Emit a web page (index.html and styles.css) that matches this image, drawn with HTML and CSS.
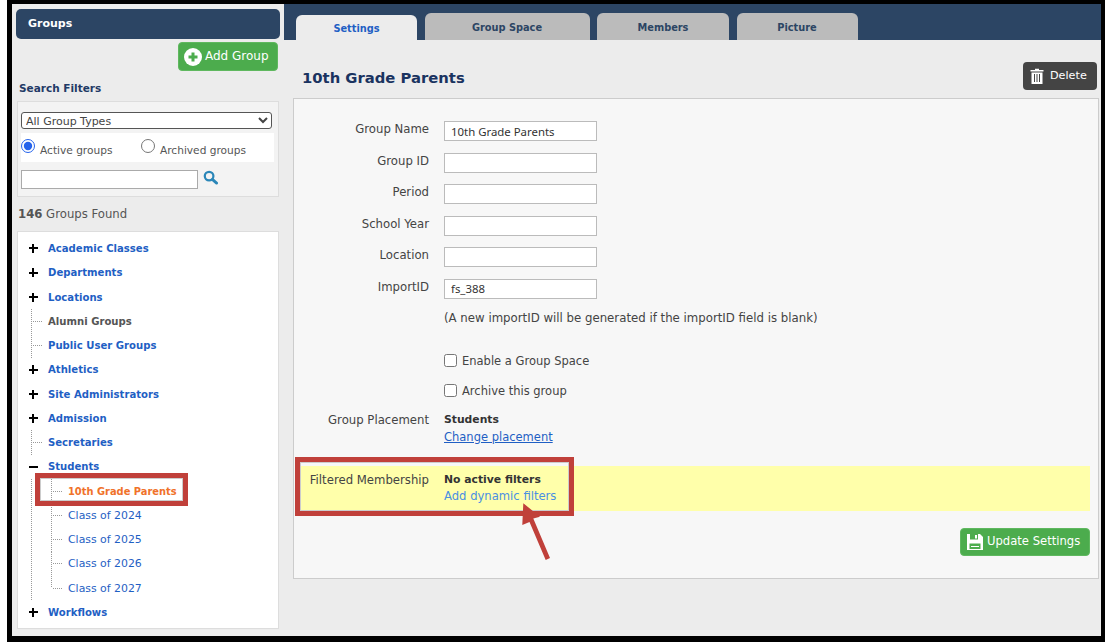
FILE: index.html
```html
<!DOCTYPE html>
<html lang="en">
<head>
<meta charset="utf-8">
<title>Groups</title>
<link rel="stylesheet" href="styles.css">
</head>
<body>
<div class="frame">
  <aside class="sidebar">
    <div class="side-head">Groups</div>
    <a class="btn btn-green add-group"><svg class="ico-plus" viewBox="0 0 18 18"><circle cx="9" cy="9" r="9" fill="#fff"/><path d="M9 4.5v9M4.5 9h9" stroke="#4cac4d" stroke-width="3"/></svg><span class="btn-label">Add Group</span></a>
    <h3 class="filters-title">Search Filters</h3>
    <div class="filters">
      <select class="type-select"><option>All Group Types</option></select>
      <div class="radio-row">
        <label class="radio radio-active"><input type="radio" name="s" checked>Active groups</label>
        <label class="radio"><input type="radio" name="s">Archived groups</label>
      </div>
      <div class="search-row">
        <input class="search-input" type="text">
        <svg class="ico-search" viewBox="0 0 16 16"><circle cx="6.5" cy="6.5" r="4.6" fill="none" stroke="#2a86b8" stroke-width="2.4"/><path d="M10 10l4.5 4" stroke="#2a86b8" stroke-width="3" stroke-linecap="round"/></svg>
      </div>
    </div>
    <p class="found"><b>146</b> Groups Found</p>
    <div class="tree">
      <div class="node"><span class="tg"></span><a>Academic Classes</a></div>
      <div class="node"><span class="tg"></span><a>Departments</a></div>
      <div class="node"><span class="tg"></span><a>Locations</a></div>
      <div class="branch">
        <div class="leaf"><span class="grey">Alumni Groups</span></div>
        <div class="leaf"><a>Public User Groups</a></div>
      </div>
      <div class="node"><span class="tg"></span><a>Athletics</a></div>
      <div class="node"><span class="tg"></span><a>Site Administrators</a></div>
      <div class="node"><span class="tg"></span><a>Admission</a></div>
      <div class="branch">
        <div class="leaf"><a>Secretaries</a></div>
      </div>
      <div class="node"><span class="tg tg-minus"></span><a>Students</a></div>
      <div class="branch">
        <div class="inner">
          <div class="leaf sub"><a class="current">10th Grade Parents</a></div>
          <div class="leaf sub"><a class="plain">Class of 2024</a></div>
          <div class="leaf sub"><a class="plain">Class of 2025</a></div>
          <div class="leaf sub"><a class="plain">Class of 2026</a></div>
          <div class="leaf sub last"><a class="plain">Class of 2027</a></div>
        </div>
      </div>
      <div class="node"><span class="tg"></span><a>Workflows</a></div>
    </div>
  </aside>
  <main class="main">
    <nav class="tabs">
      <a class="tab tab-on">Settings</a>
      <a class="tab tab-space">Group Space</a>
      <a class="tab tab-members">Members</a>
      <a class="tab tab-picture">Picture</a>
    </nav>
    <div class="head">
      <h1 class="title">10th Grade Parents</h1>
      <a class="btn btn-dark"><svg class="ico-trash" viewBox="0 0 14 16"><path d="M5 2V.8h4V2h4.5v1.6H.5V2z" fill="#fff"/><path d="M1.5 4.5h11V16h-11zM4 6v8h1V6zM6.5 6v8h1V6zM9 6v8h1V6z" fill="#fff" fill-rule="evenodd"/></svg><span class="btn-label">Delete</span></a>
    </div>
    <section class="panel">
      <div class="row"><label class="lbl">Group Name</label><input class="field" type="text" value="10th Grade Parents"></div>
      <div class="row"><label class="lbl">Group ID</label><input class="field" type="text"></div>
      <div class="row"><label class="lbl">Period</label><input class="field" type="text"></div>
      <div class="row"><label class="lbl">School Year</label><input class="field" type="text"></div>
      <div class="row"><label class="lbl">Location</label><input class="field" type="text"></div>
      <div class="row"><label class="lbl">ImportID</label><input class="field" type="text" value="fs_388"></div>
      <p class="note">(A new importID will be generated if the importID field is blank)</p>
      <label class="check check-1"><input type="checkbox">Enable a Group Space</label>
      <label class="check check-2"><input type="checkbox">Archive this group</label>
      <div class="info placement">
        <span class="lbl">Group Placement</span>
        <div class="val"><b>Students</b><a class="change">Change placement</a></div>
      </div>
      <div class="info yellow">
        <span class="lbl">Filtered Membership</span>
        <div class="val"><b>No active filters</b><a class="dyn">Add dynamic filters</a></div>
      </div>
      <div class="actions">
        <a class="btn btn-green update"><svg class="ico-save" viewBox="0 0 16 16"><path d="M0 0h13l3 3v13H0z" fill="#fff"/><path d="M3 0h8v5.5H3z" fill="#4cac4d"/><path d="M8 1h2v3.5H8z" fill="#fff"/><path d="M2.5 9.5h11V15h-11z" fill="#4cac4d"/><path d="M4 12h8v1H4z" fill="#fff"/></svg><span class="btn-label">Update Settings</span></a>
      </div>
    </section>
  </main>
  <div class="callout callout-tree"></div>
  <div class="callout callout-filter"></div>
  <svg class="arrow" viewBox="0 0 40 70"><path d="M1.3.3L18 13.7 11.3 15.5 28 55 23.7 57 7.5 19 .3 22z" fill="#c0403a"/></svg>
</div>
</body>
</html>
```

FILE: styles.css
```css
* { box-sizing: border-box; }
html, body { margin: 0; padding: 0; background: #fff; }
body { width: 1105px; height: 642px; overflow: hidden; font-family: "DejaVu Sans", sans-serif; font-size: 11px; color: #444; }
.frame { position: relative; display: flex; width: 1098px; height: 642px; margin-left: 7px; border-style: solid; border-color: #000; border-width: 4px 4px 6px 5px; background: #ececec; }
a { color: #1f5fc4; }
.sidebar { width: 272px; padding: 5px 4px 0; display: flex; flex-direction: column; }
.side-head { height: 30px; padding-left: 12px; line-height: 30px; border-radius: 5px; background: #2c4564; color: #fff; font-weight: bold; font-size: 11px; }
.btn { display: inline-flex; align-items: center; color: #fff; border-radius: 4px; font-size: 12px; }
.btn-label { margin-top: -2px; }
.btn-green { background: #4cac4d; border: 1px solid #5fb85f; }
.add-group { align-self: flex-end; width: 100px; height: 29px; margin: 3px 2px 0 0; padding-left: 5px; gap: 3px; }
.ico-plus { width: 18px; height: 18px; flex: none; }
.filters-title { margin: 9px 0 0 3px; font-size: 10.5px; line-height: 16px; color: #1f3a66; }
.filters { width: 262px; height: 96px; margin: 5px 0 0 1px; padding: 10px 3px 0; background: #f3f3f3; border: 1px solid #ddd; }
.type-select { display: block; width: 251px; height: 17px; padding: 1px 0 0; border: 1px solid #555; border-radius: 3px; background: #fff; color: #444; font: 11px "DejaVu Sans", sans-serif; }
.radio-row { display: flex; width: 253px; height: 29px; margin-top: 4px; background: #fff; }
.radio { display: flex; align-items: flex-start; font-size: 10.6px; line-height: 16px; padding-top: 9px; color: #555; }
.radio input { width: 14px; height: 14px; margin: -3px 5px 0 0; accent-color: #2563eb; }
.radio-active { width: 120px; }
.search-row { display: flex; align-items: flex-start; margin-top: 8px; }
.search-input { width: 177px; height: 19px; margin: 0; padding: 0; border: 1px solid #aaa; background: #fff; }
.ico-search { width: 15px; height: 15px; margin: 0 0 0 5px; }
.found { margin: 8.6px 0 0 2px; line-height: 16px; font-size: 11.7px; color: #555; }
.tree { width: 262px; height: 398px; margin: 9.4px 0 0 1px; padding: 4.4px 0 0 11px; background: #fff; border: 1px solid #ddd; font-size: 10.1px; font-weight: bold; }
.tree a { color: #1f5fc4; }
.node, .leaf { display: flex; align-items: center; height: 24.25px; }
.tg { width: 19px; flex: none; height: 9px; background: linear-gradient(#000, #000) 0 center / 9px 2.4px no-repeat, linear-gradient(#000, #000) 3.3px 0 / 2.4px 9px no-repeat; }
.tg-minus { background: linear-gradient(#000, #000) 0 center / 9px 2.4px no-repeat; }
.branch { margin-left: 2px; background: repeating-linear-gradient(#999 0 1px, transparent 1px 2px) left top / 1px 100% no-repeat; }
.inner { margin-left: 20px; }
.leaf { padding-left: 2px; }
.leaf::before { content: ""; flex: none; width: 10px; height: 1px; margin-right: 5px; background: repeating-linear-gradient(90deg, #999 0 1px, transparent 1px 2px); }
.sub { background: repeating-linear-gradient(#999 0 1px, transparent 1px 2px) left top / 1px 100% no-repeat; }
.last { background-size: 1px 50%; }
.grey { color: #555; }
.tree a.current { color: #f0722a; font-size: 9.9px; }
.tree a.plain { font-weight: normal; font-size: 10.9px; }
.main { width: 817px; display: flex; flex-direction: column; }
.tabs { display: flex; align-items: flex-end; height: 36px; padding-left: 12px; gap: 7.5px; background: #2c4564; }
.tab { display: flex; align-items: center; justify-content: center; width: 121px; height: 27px; padding-top: 1px; border-radius: 6px 6px 0 0; background: #bbb; color: #2c4564; font-weight: bold; font-size: 9.8px; }
.tab-on { height: 25px; background: #ececec; color: #1f5fc4; padding-top: 2px; }
.tab-space { width: 165px; }
.tab-members { width: 132px; }
.head { display: flex; justify-content: space-between; align-items: flex-start; height: 58px; padding: 22px 4px 0 18px; }
.title { margin: 6px 0 0; font-size: 14.8px; line-height: 20px; color: #1a3360; }
.btn-dark { width: 74px; height: 28px; padding-left: 7px; gap: 6px; background: #444; font-size: 11.2px; }
.ico-trash { width: 14px; height: 16px; }
.panel { display: flex; flex-direction: column; width: 806px; height: 481px; margin-left: 9px; padding-top: 22px; background: #f7f7f7; border: 1px solid #ccc; }
.row { display: flex; height: 31.6px; gap: 15px; align-items: flex-start; }
.lbl { display: block; flex: none; width: 135px; text-align: right; line-height: 16px; font-size: 11.7px; color: #444; }
.field { width: 153px; height: 20px; margin: 0; padding: 0 6px; border: 1px solid #bbb; background: #fff; color: #333; font: 11.4px/16px "Noto Sans", sans-serif; }
.note { margin: -1px 0 0 150px; line-height: 16px; font-size: 11.75px; color: #444; }
.check { display: flex; align-items: center; height: 16px; margin-left: 150px; font-size: 11.5px; }
.check input { width: 13px; height: 13px; margin: 0 5px 0 0; }
.check-1 { margin-top: 27px; }
.check-2 { margin-top: 14px; }
.info { display: flex; gap: 15px; line-height: 16px; }
.placement { margin-top: 13px; }
.val { display: flex; flex-direction: column; font-size: 10.8px; }
.val b { color: #333; }
.change { margin-top: 1px; color: #1f5fc4; text-decoration: underline; font-size: 11.5px; }
.yellow { height: 45px; margin: 21.4px 8px 0 6px; padding-top: 6px; background: #ffffaa; }
.yellow .lbl { width: 129px; }
.dyn { color: #4a90e2; font-size: 11.6px; }
.actions { display: flex; justify-content: flex-end; margin: 16.6px 8px 0 0; }
.update { width: 130px; height: 28px; padding-left: 6px; gap: 4px; font-size: 11.6px; }
.ico-save { width: 16px; height: 16px; }
.callout { position: absolute; border: 5px solid #c0403a; box-shadow: inset 0 0 0 1px #ccc; }
.callout-tree { left: 23px; top: 469px; width: 153px; height: 33px; }
.callout-filter { left: 283px; top: 453px; width: 279px; height: 59px; }
.arrow { position: absolute; left: 510px; top: 499px; width: 40px; height: 70px; }
```
